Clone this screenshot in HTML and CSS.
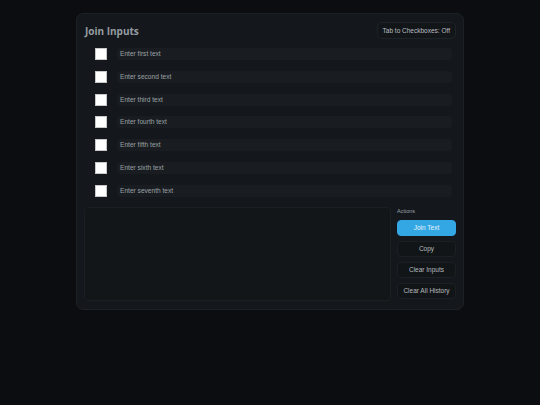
FILE: index.html
```html
<!DOCTYPE html>
<html>
<head>
<meta charset="utf-8">
<link rel="stylesheet" href="styles.css">
</head>
<body>
<div class="page">
  <div class="card">
    <div class="header">
      <h1 class="title">Join Inputs</h1>
      <button class="toggle">Tab to Checkboxes: Off</button>
    </div>
    <div class="rows">
      <div class="row"><span class="box"></span><div class="input">Enter first text</div></div>
      <div class="row"><span class="box"></span><div class="input">Enter second text</div></div>
      <div class="row"><span class="box"></span><div class="input">Enter third text</div></div>
      <div class="row"><span class="box"></span><div class="input">Enter fourth text</div></div>
      <div class="row"><span class="box"></span><div class="input">Enter fifth text</div></div>
      <div class="row"><span class="box"></span><div class="input">Enter sixth text</div></div>
      <div class="row"><span class="box"></span><div class="input">Enter seventh text</div></div>
    </div>
    <div class="bottom">
      <div class="output"></div>
      <div class="actions">
        <div class="label">Actions</div>
        <button class="btn primary">Join Text</button>
        <button class="btn">Copy</button>
        <button class="btn">Clear Inputs</button>
        <button class="btn">Clear All History</button>
      </div>
    </div>
  </div>
</div>
</body>
</html>
```

FILE: styles.css
```css
* { box-sizing: border-box; }
html, body { margin: 0; padding: 0; }
body {
  background: #0b0d10;
  width: 540px;
  height: 405px;
  font-family: "Liberation Sans", Arial, sans-serif;
}
.page {
  padding: 13px 0 0 76px;
}
.card {
  width: 388px;
  height: 297px;
  background: #14181c;
  border: 1px solid #1c2126;
  border-radius: 7px;
  padding: 8px;
  display: flex;
  flex-direction: column;
}
.header {
  display: flex;
  justify-content: space-between;
  align-items: center;
  height: 17px;
}
.title {
  margin: 0;
  font-family: "Open Sans", sans-serif;
  font-weight: 700;
  font-size: 10px;
  color: #969ca2;
}
.toggle {
  height: 17px;
  padding: 0 5px;
  background: #131619;
  border: 1px solid #1e2328;
  border-radius: 5px;
  color: #b9bdc1;
  font-family: "Liberation Sans", Arial, sans-serif;
  font-size: 6.5px;
  margin-right: -1px;
}
.rows {
  display: flex;
  flex-direction: column;
  gap: 10.8px;
  margin-top: 9px;
  padding: 0 3px 0 10px;
}
.row {
  display: flex;
  align-items: center;
  gap: 10px;
  height: 12px;
}
.box {
  width: 12px;
  height: 12px;
  background: #ffffff;
  border: 1px solid #c8c8c8;
  flex: none;
}
.input {
  flex: 1;
  height: 12px;
  background: #191d21;
  border-radius: 4px;
  color: #9ca1a6;
  font-size: 6.6px;
  line-height: 12px;
  padding-left: 3px;
}
.bottom {
  display: flex;
  gap: 6px;
  margin-top: 10px;
  flex: 1;
}
.output {
  flex: 1;
  margin-left: -1px;
  background: #121619;
  border: 1px solid #1a1f23;
  border-radius: 4px;
}
.actions {
  width: 59px;
  display: flex;
  flex-direction: column;
  gap: 5px;
  margin-right: -1px;
}
.label {
  font-size: 5.5px;
  color: #9aa0a5;
  margin-top: 1px;
  height: 7px;
}
.btn {
  height: 16px;
  background: #121518;
  border: 1px solid #1b2024;
  border-radius: 4px;
  color: #b6babe;
  font-family: "Liberation Sans", Arial, sans-serif;
  font-size: 6.5px;
  padding: 0;
}
.btn.primary {
  background: #33a7e4;
  border-color: #33a7e4;
  color: #e6f3fb;
}
```
